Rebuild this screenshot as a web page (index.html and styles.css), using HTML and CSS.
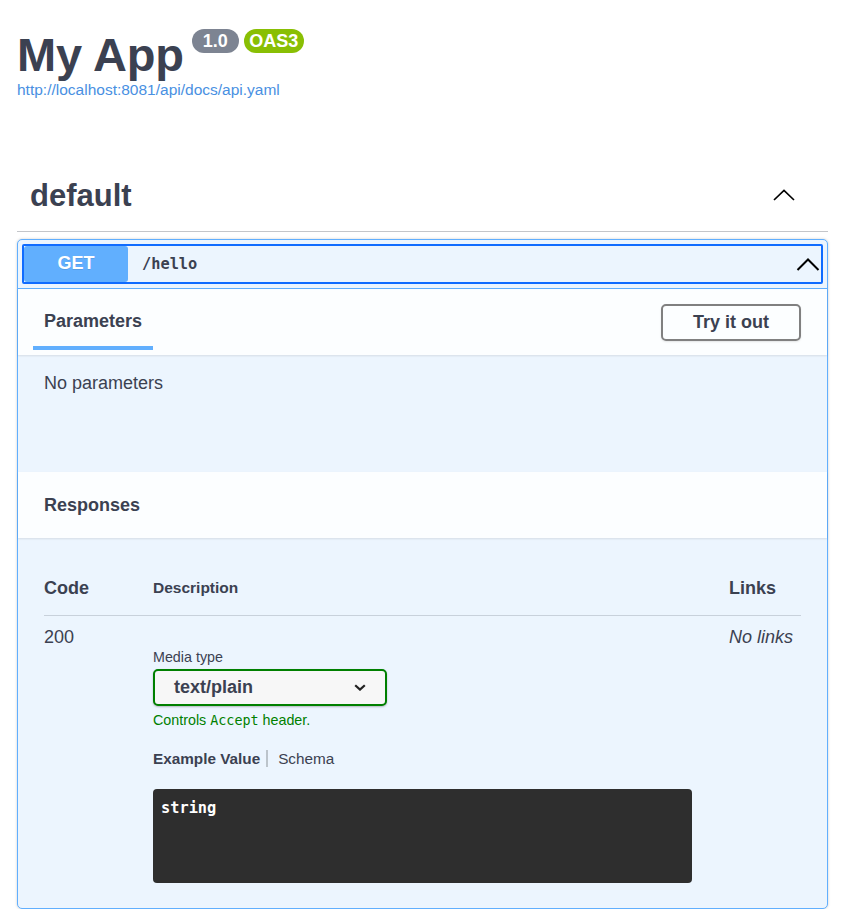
FILE: index.html
```html
<!DOCTYPE html>
<html lang="en">
<head>
<meta charset="utf-8">
<title>My App</title>
<link rel="stylesheet" href="styles.css">
</head>
<body>
<div class="page">
  <header class="info">
    <h1 class="title"><span class="name">My App</span><span class="badge ver">1.0</span><span class="badge oas">OAS3</span></h1>
    <a class="link" href="#">http://localhost:8081/api/docs/api.yaml</a>
  </header>

  <section class="tag-section">
    <h3 class="tag">
      <span class="tag-name">default</span>
      <svg class="tag-arrow" width="22" height="12" viewBox="0 0 22 12"><polyline points="1,11 11,1.5 21,11" fill="none" stroke="#000" stroke-width="1.7"/></svg>
    </h3>

    <div class="opblock">
      <div class="summary">
        <div class="summary-inner">
          <span class="method">GET</span>
          <span class="path">/hello</span>
          <svg class="sum-arrow" width="24" height="13" viewBox="0 0 24 13"><polyline points="1.5,12 12,1.5 22.5,12" fill="none" stroke="#000" stroke-width="2"/></svg>
        </div>
      </div>

      <div class="sec-head">
        <div class="tab-item"><h4 class="sec-title">Parameters</h4></div>
        <button class="try">Try it out</button>
      </div>
      <div class="params-body">No parameters</div>

      <div class="sec-head resp-head">
        <h4 class="sec-title">Responses</h4>
      </div>

      <div class="responses">
        <div class="rtable">
          <div class="rhead">
            <div class="th th-code">Code</div>
            <div class="th th-desc">Description</div>
            <div class="th th-links">Links</div>
          </div>
          <div class="rrow">
            <div class="td-code">200</div>
            <div class="td-desc">
              <div class="media-label">Media type</div>
              <div class="select">
                <span class="select-text">text/plain</span>
                <svg class="select-chev" width="12" height="7" viewBox="0 0 12 7"><polyline points="1.2,1.2 6,5.6 10.8,1.2" fill="none" stroke="#222" stroke-width="2.2"/></svg>
              </div>
              <div class="controls">Controls <code class="mono">Accept</code> header.</div>
              <ul class="ex-tabs">
                <li class="ex-tab active">Example Value</li>
                <li class="ex-tab">Schema</li>
              </ul>
              <pre class="code-block">string</pre>
            </div>
            <div class="td-links">No links</div>
          </div>
        </div>
      </div>
    </div>
  </section>
</div>
</body>
</html>
```

FILE: styles.css
```css
* { box-sizing: border-box; }

html, body {
  margin: 0;
  padding: 0;
  background: #fff;
}

body {
  font-family: "Liberation Sans", Arial, Helvetica, sans-serif;
  color: #3b4151;
}

.page {
  padding: 0 19px 0 17px;
}

/* ---------- info ---------- */
.info {
  padding-top: 27px;
}

.title {
  display: flex;
  align-items: flex-start;
  margin: 0;
  font-size: 47px;
  line-height: 56px;
  font-weight: 700;
  color: #3b4151;
}

.name {
  letter-spacing: -0.2px;
}

.badge {
  display: inline-block;
  margin-top: 2px;
  font-size: 18px;
  line-height: 20px;
  font-weight: 700;
  color: #fff;
  border-radius: 57px;
  padding: 2px 11px;
  letter-spacing: 0;
}

.badge.ver {
  margin-left: 8px;
  background: #7d8492;
}

.badge.oas {
  margin-left: 5px;
  padding: 2px 5.5px;
  background: #89bf04;
}

.link {
  display: block;
  margin-top: -2px;
  font-size: 15.5px;
  line-height: 18px;
  color: #4990e2;
  text-decoration: none;
}

/* ---------- tag ---------- */
.tag-section {
  margin-top: 62px;
}

.tag {
  display: flex;
  align-items: center;
  height: 71px;
  margin: 0;
  padding: 0 33px 0 13px;
  border-bottom: 1px solid rgba(59, 65, 81, 0.3);
  font-size: 31px;
  font-weight: 700;
  color: #3b4151;
}

.tag-arrow {
  margin-left: auto;
  margin-top: -2px;
}

/* ---------- opblock ---------- */
.opblock {
  margin-top: 7px;
  border: 1px solid #61affe;
  border-radius: 5px;
  background: #ecf5fe;
  box-shadow: 0 0 3px rgba(0, 0, 0, 0.19);
}

.summary {
  padding: 4px;
  border-bottom: 1px solid #61affe;
}

.summary-inner {
  display: flex;
  align-items: center;
  border: 2px solid #106cff;
  border-radius: 2px;
}

.method {
  width: 104px;
  height: 36px;
  line-height: 35px;
  text-align: center;
  background: #61affe;
  border-radius: 3px;
  color: #fff;
  font-size: 18px;
  font-weight: 700;
  text-shadow: 0 1px 0 rgba(0, 0, 0, 0.1);
}

.path {
  margin-left: 14px;
  font-family: "DejaVu Sans Mono", "Liberation Mono", monospace;
  font-weight: 700;
  font-size: 15.3px;
  color: #3b4151;
}

.sum-arrow {
  margin-left: auto;
  margin-right: 1px;
}

/* ---------- sections ---------- */
.sec-head {
  display: flex;
  align-items: center;
  height: 66px;
  padding: 0 26px 0 15px;
  background: rgba(255, 255, 255, 0.85);
  box-shadow: 0 1px 2px rgba(0, 0, 0, 0.1);
}

.tab-item {
  align-self: flex-end;
  margin-bottom: 5px;
  padding: 0 11px 14px;
  border-bottom: 4px solid #61affe;
}

.sec-title {
  margin: 0;
  font-size: 18px;
  line-height: 22px;
  font-weight: 700;
  color: #3b4151;
}

.try {
  margin-left: auto;
  width: 140px;
  height: 37px;
  padding: 0;
  border: 2px solid #808080;
  border-radius: 5px;
  background: transparent;
  box-shadow: 0 1px 2px rgba(0, 0, 0, 0.1);
  font-family: "Liberation Sans", Arial, Helvetica, sans-serif;
  font-size: 18px;
  font-weight: 700;
  color: #3b4151;
}

.params-body {
  height: 117px;
  padding: 17px 26px 0;
  font-size: 18px;
  line-height: 22px;
  color: #3b4151;
}

.resp-head {
  padding-left: 26px;
}

/* ---------- responses ---------- */
.responses {
  padding: 39px 26px 25px;
}

.rhead,
.rrow {
  display: grid;
  grid-template-columns: 109px 1fr 72px;
}

.rhead {
  align-items: center;
  padding-bottom: 16px;
  border-bottom: 1px solid rgba(59, 65, 81, 0.2);
}

.th {
  font-weight: 700;
  line-height: 22px;
  font-size: 18px;
}

.th-desc {
  font-size: 15.5px;
}

.rrow {
  padding-top: 10px;
}

.td-code {
  font-size: 18px;
  line-height: 22px;
}

.td-links {
  font-size: 18px;
  line-height: 22px;
  font-style: italic;
  white-space: nowrap;
}

.media-label {
  margin-top: 22px;
  font-size: 14.3px;
  line-height: 18px;
}

.select {
  display: flex;
  align-items: center;
  width: 234px;
  height: 37px;
  margin-top: 3px;
  padding: 0 19px 0 19px;
  border: 2px solid #008000;
  border-radius: 5px;
  background: #f7f7f7;
  box-shadow: 0 1px 2px 0 rgba(0, 0, 0, 0.25);
}

.select-text {
  font-size: 18px;
  font-weight: 700;
  color: #3b4151;
}

.select-chev {
  margin-left: auto;
}

.controls {
  margin-top: 5px;
  font-size: 14.3px;
  line-height: 18px;
  color: #008000;
}

.mono {
  font-family: "DejaVu Sans Mono", "Liberation Mono", monospace;
  font-size: 13.4px;
}

.ex-tabs {
  display: flex;
  margin: 20px 0 0;
  padding: 0;
  list-style: none;
}

.ex-tab {
  font-size: 15.3px;
  line-height: 17px;
  color: #3b4151;
}

.ex-tab.active {
  font-weight: 700;
  padding-right: 6px;
  border-right: 2px solid rgba(0, 0, 0, 0.2);
}

.ex-tab + .ex-tab {
  margin-left: 10px;
}

.code-block {
  width: 539px;
  height: 94px;
  margin: 22px 0 0;
  padding: 10px 8px 8px;
  background: #2e2e2e;
  border-radius: 4px;
  color: #fff;
  font-family: "DejaVu Sans Mono", "Liberation Mono", monospace;
  font-weight: 700;
  font-size: 15.3px;
  line-height: 19px;
}
```
